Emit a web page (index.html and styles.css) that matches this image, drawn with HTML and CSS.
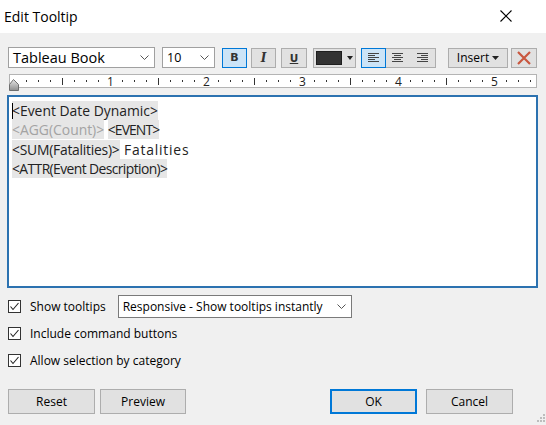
FILE: index.html
```html
<!DOCTYPE html>
<html>
<head>
<meta charset="utf-8">
<link rel="stylesheet" href="styles.css">
</head>
<body>
<div class="window">
  <header class="titlebar">
    <span class="title">Edit Tooltip</span>
    <svg class="close" width="12" height="12" viewBox="0 0 12 12"><path d="M0.5 0.5 L11.5 11.5 M11.5 0.5 L0.5 11.5" stroke="#000" stroke-width="1.1" fill="none"/></svg>
  </header>
  <main class="content">
    <div class="toolbar">
      <div class="combo combo-font"><span>Tableau Book</span><svg class="chev" width="9" height="5" viewBox="0 0 9 5"><polyline points="0.5,0.5 4.5,4.5 8.5,0.5" fill="none" stroke="#555" stroke-width="1"/></svg></div>
      <div class="combo combo-size"><span>10</span><svg class="chev" width="9" height="5" viewBox="0 0 9 5"><polyline points="0.5,0.5 4.5,4.5 8.5,0.5" fill="none" stroke="#555" stroke-width="1"/></svg></div>
      <div class="tbtn active btn-b"><span class="glyph-b">B</span></div>
      <div class="tbtn btn-i"><span class="glyph-i">I</span></div>
      <div class="tbtn btn-u"><span class="glyph-u">U</span></div>
      <div class="tbtn btn-color"><span class="swatch"></span><svg width="6" height="4" viewBox="0 0 6 4"><polygon points="0,0 6,0 3,4" fill="#222"/></svg></div>
      <div class="align-group">
        <div class="abtn active"><svg width="11" height="9" viewBox="0 0 11 9"><path d="M0 0.5H11M0 2.5H7M0 4.5H11M0 6.5H7M0 8.5H11" stroke="#444" stroke-width="1"/></svg></div>
        <div class="abtn"><svg width="11" height="9" viewBox="0 0 11 9"><path d="M0 0.5H11M2 2.5H9M0 4.5H11M2 6.5H9M0 8.5H11" stroke="#444" stroke-width="1"/></svg></div>
        <div class="abtn"><svg width="11" height="9" viewBox="0 0 11 9"><path d="M0 0.5H11M4 2.5H11M0 4.5H11M4 6.5H11M0 8.5H11" stroke="#444" stroke-width="1"/></svg></div>
      </div>
      <div class="tbtn btn-insert"><span>Insert</span><svg width="7" height="4" viewBox="0 0 7 4"><polygon points="0,0 7,0 3.5,4" fill="#222"/></svg></div>
      <div class="tbtn btn-x"><svg width="14" height="14" viewBox="0 0 14 14"><path d="M1 1 L13 13 M13 1 L1 13" stroke="#c9573f" stroke-width="2.2" fill="none"/></svg></div>
    </div>

    <svg class="ruler" width="530" height="20" viewBox="0 0 530 20">
      <rect x="1.5" y="2.5" width="527" height="13" fill="#fff" stroke="#b4b4b4"/>
      <g stroke="#333" stroke-width="1">
        <path d="M18.5 8V10M30.5 8V10M42.5 8V10M54.5 6V13M66.5 8V10M78.5 8V10M90.5 8V10"/>
        <path d="M114.5 8V10M126.5 8V10M138.5 8V10M150.5 6V13M162.5 8V10M174.5 8V10M186.5 8V10"/>
        <path d="M210.5 8V10M222.5 8V10M234.5 8V10M246.5 6V13M258.5 8V10M270.5 8V10M282.5 8V10"/>
        <path d="M306.5 8V10M318.5 8V10M330.5 8V10M342.5 6V13M354.5 8V10M366.5 8V10M378.5 8V10"/>
        <path d="M402.5 8V10M414.5 8V10M426.5 8V10M438.5 6V13M450.5 8V10M462.5 8V10M474.5 8V10"/>
        <path d="M498.5 8V10M510.5 8V10M522.5 8V10"/>
      </g>
      <g class="rnum" font-size="12" fill="#222" text-anchor="middle">
        <text x="102.5" y="14">1</text>
        <text x="198.5" y="14">2</text>
        <text x="294.5" y="14">3</text>
        <text x="390.5" y="14">4</text>
        <text x="486.5" y="14">5</text>
      </g>
      <defs>
        <linearGradient id="tg" x1="0" y1="0" x2="0" y2="1">
          <stop offset="0" stop-color="#e6e6e6"/>
          <stop offset="1" stop-color="#8e8e8e"/>
        </linearGradient>
      </defs>
      <polygon points="5.5,7.5 10.5,12.5 10.5,18.5 1.5,18.5 1.5,12.5" fill="url(#tg)" stroke="#6e6e6e"/>
    </svg>

    <div class="editor">
      <div class="line"><span class="caret"></span><span class="field">&lt;Event Date Dynamic&gt;</span></div>
      <div class="line"><span class="field dim">&lt;AGG(Count)&gt;</span> <span class="field tight-caps">&lt;EVENT&gt;</span></div>
      <div class="line"><span class="field tight-sm">&lt;SUM(Fatalities)&gt;</span><span class="plain-wide"> Fatalities</span></div>
      <div class="line"><span class="field tight-md">&lt;ATTR(Event Description)&gt;</span></div>
    </div>

    <div class="options">
      <div class="opt-row">
        <span class="check"><svg width="11" height="11" viewBox="0 0 11 11"><polyline points="1.5,5.5 4,8.5 9.5,2" fill="none" stroke="#222" stroke-width="1.1"/></svg></span>
        <span class="opt-label">Show tooltips</span>
        <div class="combo combo-resp"><span>Responsive - Show tooltips instantly</span><svg class="chev" width="9" height="5" viewBox="0 0 9 5"><polyline points="0.5,0.5 4.5,4.5 8.5,0.5" fill="none" stroke="#555" stroke-width="1"/></svg></div>
      </div>
      <div class="opt-row">
        <span class="check"><svg width="11" height="11" viewBox="0 0 11 11"><polyline points="1.5,5.5 4,8.5 9.5,2" fill="none" stroke="#222" stroke-width="1.1"/></svg></span>
        <span class="opt-label">Include command buttons</span>
      </div>
      <div class="opt-row">
        <span class="check"><svg width="11" height="11" viewBox="0 0 11 11"><polyline points="1.5,5.5 4,8.5 9.5,2" fill="none" stroke="#222" stroke-width="1.1"/></svg></span>
        <span class="opt-label">Allow selection by category</span>
      </div>
    </div>

    <div class="footer">
      <div class="btn">Reset</div>
      <div class="btn btn-preview">Preview</div>
      <div class="spacer"></div>
      <div class="btn btn-ok">OK</div>
      <div class="btn btn-cancel">Cancel</div>
    </div>
  </main>
  <svg class="grip" width="10" height="10" viewBox="0 0 10 10">
    <g fill="#bdbdbd">
      <rect x="8" y="0" width="2" height="2"/>
      <rect x="5" y="3" width="2" height="2"/><rect x="8" y="3" width="2" height="2"/>
      <rect x="2" y="6" width="2" height="2"/><rect x="5" y="6" width="2" height="2"/><rect x="8" y="6" width="2" height="2"/>
    </g>
  </svg>
</div>
</body>
</html>
```

FILE: styles.css
```css
* { box-sizing: border-box; }

html, body {
  margin: 0;
  padding: 0;
}

body {
  width: 546px;
  height: 425px;
  overflow: hidden;
  background: #f0f0f0;
  font-family: "Open Sans", "Noto Sans", sans-serif;
  font-size: 11.5px;
  color: #000;
}

.window {
  position: relative;
  width: 546px;
  height: 425px;
}

.titlebar {
  height: 33px;
  background: #fff;
  display: flex;
  align-items: center;
  justify-content: space-between;
  padding: 0 34px 0 4px;
}

.title {
  font-size: 14px;
  color: #000;
  margin-top: -1px;
}

.close { display: block; margin-top: -1px; }

.content {
  padding: 14px 9px 0 8px;
}

/* toolbar */
.toolbar {
  display: flex;
  align-items: center;
  height: 21px;
}

.combo {
  height: 21px;
  background: #fff;
  border: 1px solid #a0a0a0;
  display: flex;
  align-items: center;
  justify-content: space-between;
  padding: 0 5px 0 4px;
  color: #000;
}

.combo-font { width: 147px; font-size: 14.5px; padding-left: 4px; }
.combo-size { width: 53px; margin-left: 7px; font-size: 12.5px; }

.tbtn {
  height: 20px;
  border: 1px solid #adadad;
  background: #e1e1e1;
  display: flex;
  align-items: center;
  justify-content: center;
}

.tbtn.active, .abtn.active {
  background: #cce4f7;
  border: 1px solid #0078d7;
}

.btn-b { width: 25px; margin-left: 7px; }
.btn-i { width: 25px; margin-left: 4px; }
.btn-u { width: 26px; margin-left: 5px; }

.glyph-b {
  font-family: "DejaVu Sans", sans-serif;
  font-weight: bold;
  font-size: 11px;
  color: #333;
}
.glyph-i {
  font-family: "DejaVu Serif", serif;
  font-style: italic;
  font-weight: bold;
  font-size: 12px;
  color: #333;
}
.glyph-u {
  font-family: "DejaVu Sans", sans-serif;
  font-weight: bold;
  font-size: 10.5px;
  color: #333;
  text-decoration: underline;
  text-underline-offset: 1px;
}

.btn-color {
  width: 43px;
  margin-left: 6px;
  justify-content: flex-start;
  padding-left: 2px;
  gap: 5px;
}
.swatch {
  width: 26px;
  height: 14px;
  background: #333;
  border: 1px solid #1e1e1e;
}

.align-group {
  display: flex;
  margin-left: 5px;
  height: 20px;
  border: 1px solid #adadad;
  background: #e1e1e1;
  width: 75px;
}
.abtn {
  flex: 1;
  display: flex;
  align-items: center;
  justify-content: center;
  border: 1px solid transparent;
  margin: -1px 0 -1px -1px;
  height: 20px;
}
.abtn svg, .tbtn svg { display: block; }

.btn-insert {
  width: 60px;
  margin-left: 12px;
  gap: 3px;
  font-size: 12px;
}
.btn-x { width: 26px; margin-left: 3px; }

/* ruler */
.ruler {
  display: block;
  margin-top: 4px;
}
.rnum { font-family: "Open Sans", sans-serif; }

/* editor */
.editor {
  margin-top: 3px;
  margin-left: -1px;
  width: 531px;
  height: 193px;
  background: #fff;
  border: 2px solid #2c72b0;
  padding: 4px 3px;
  font-size: 13.9px;
  line-height: 19.3px;
  color: #222;
}
.line { height: 19.3px; white-space: nowrap; }
.field {
  background: #e6e6e6;
  color: #222;
  padding: 0;
}
.field.dim { color: #a3a3a3; }
.tight-caps { letter-spacing: -0.9px; }
.tight-sm { letter-spacing: -0.25px; }
.tight-md { letter-spacing: -0.6px; }
.plain-wide { letter-spacing: 0.8px; }
.caret {
  display: inline-block;
  width: 1px;
  height: 16px;
  background: #000;
  vertical-align: -3px;
  margin-right: -1px;
  position: relative;
}

/* options */
.options {
  margin-top: 7px;
  display: flex;
  flex-direction: column;
  gap: 4px;
}
.opt-row {
  display: flex;
  align-items: center;
  height: 23px;
  font-size: 12px;
}
.check {
  width: 13px;
  height: 13px;
  border: 1px solid #333;
  background: #fff;
  display: flex;
  align-items: center;
  justify-content: center;
}
.check svg { display: block; }
.opt-label { margin-left: 9px; }
.combo-resp {
  width: 234px;
  height: 23px;
  margin-left: 12px;
  font-size: 12px;
  border-color: #7a7a7a;
}

/* footer */
.footer {
  display: flex;
  margin-top: 17px;
  margin-right: 24px;
}
.btn {
  width: 87px;
  height: 25px;
  border: 1px solid #adadad;
  background: #e1e1e1;
  display: flex;
  align-items: center;
  justify-content: center;
  font-size: 12px;
}
.btn-preview { width: 86px; margin-left: 5px; }
.spacer { flex: 1; }
.btn-ok { border: 2px solid #0078d7; }
.btn-cancel { margin-left: 9px; }

.grip {
  position: absolute;
  right: 1px;
  bottom: 1px;
}
```
